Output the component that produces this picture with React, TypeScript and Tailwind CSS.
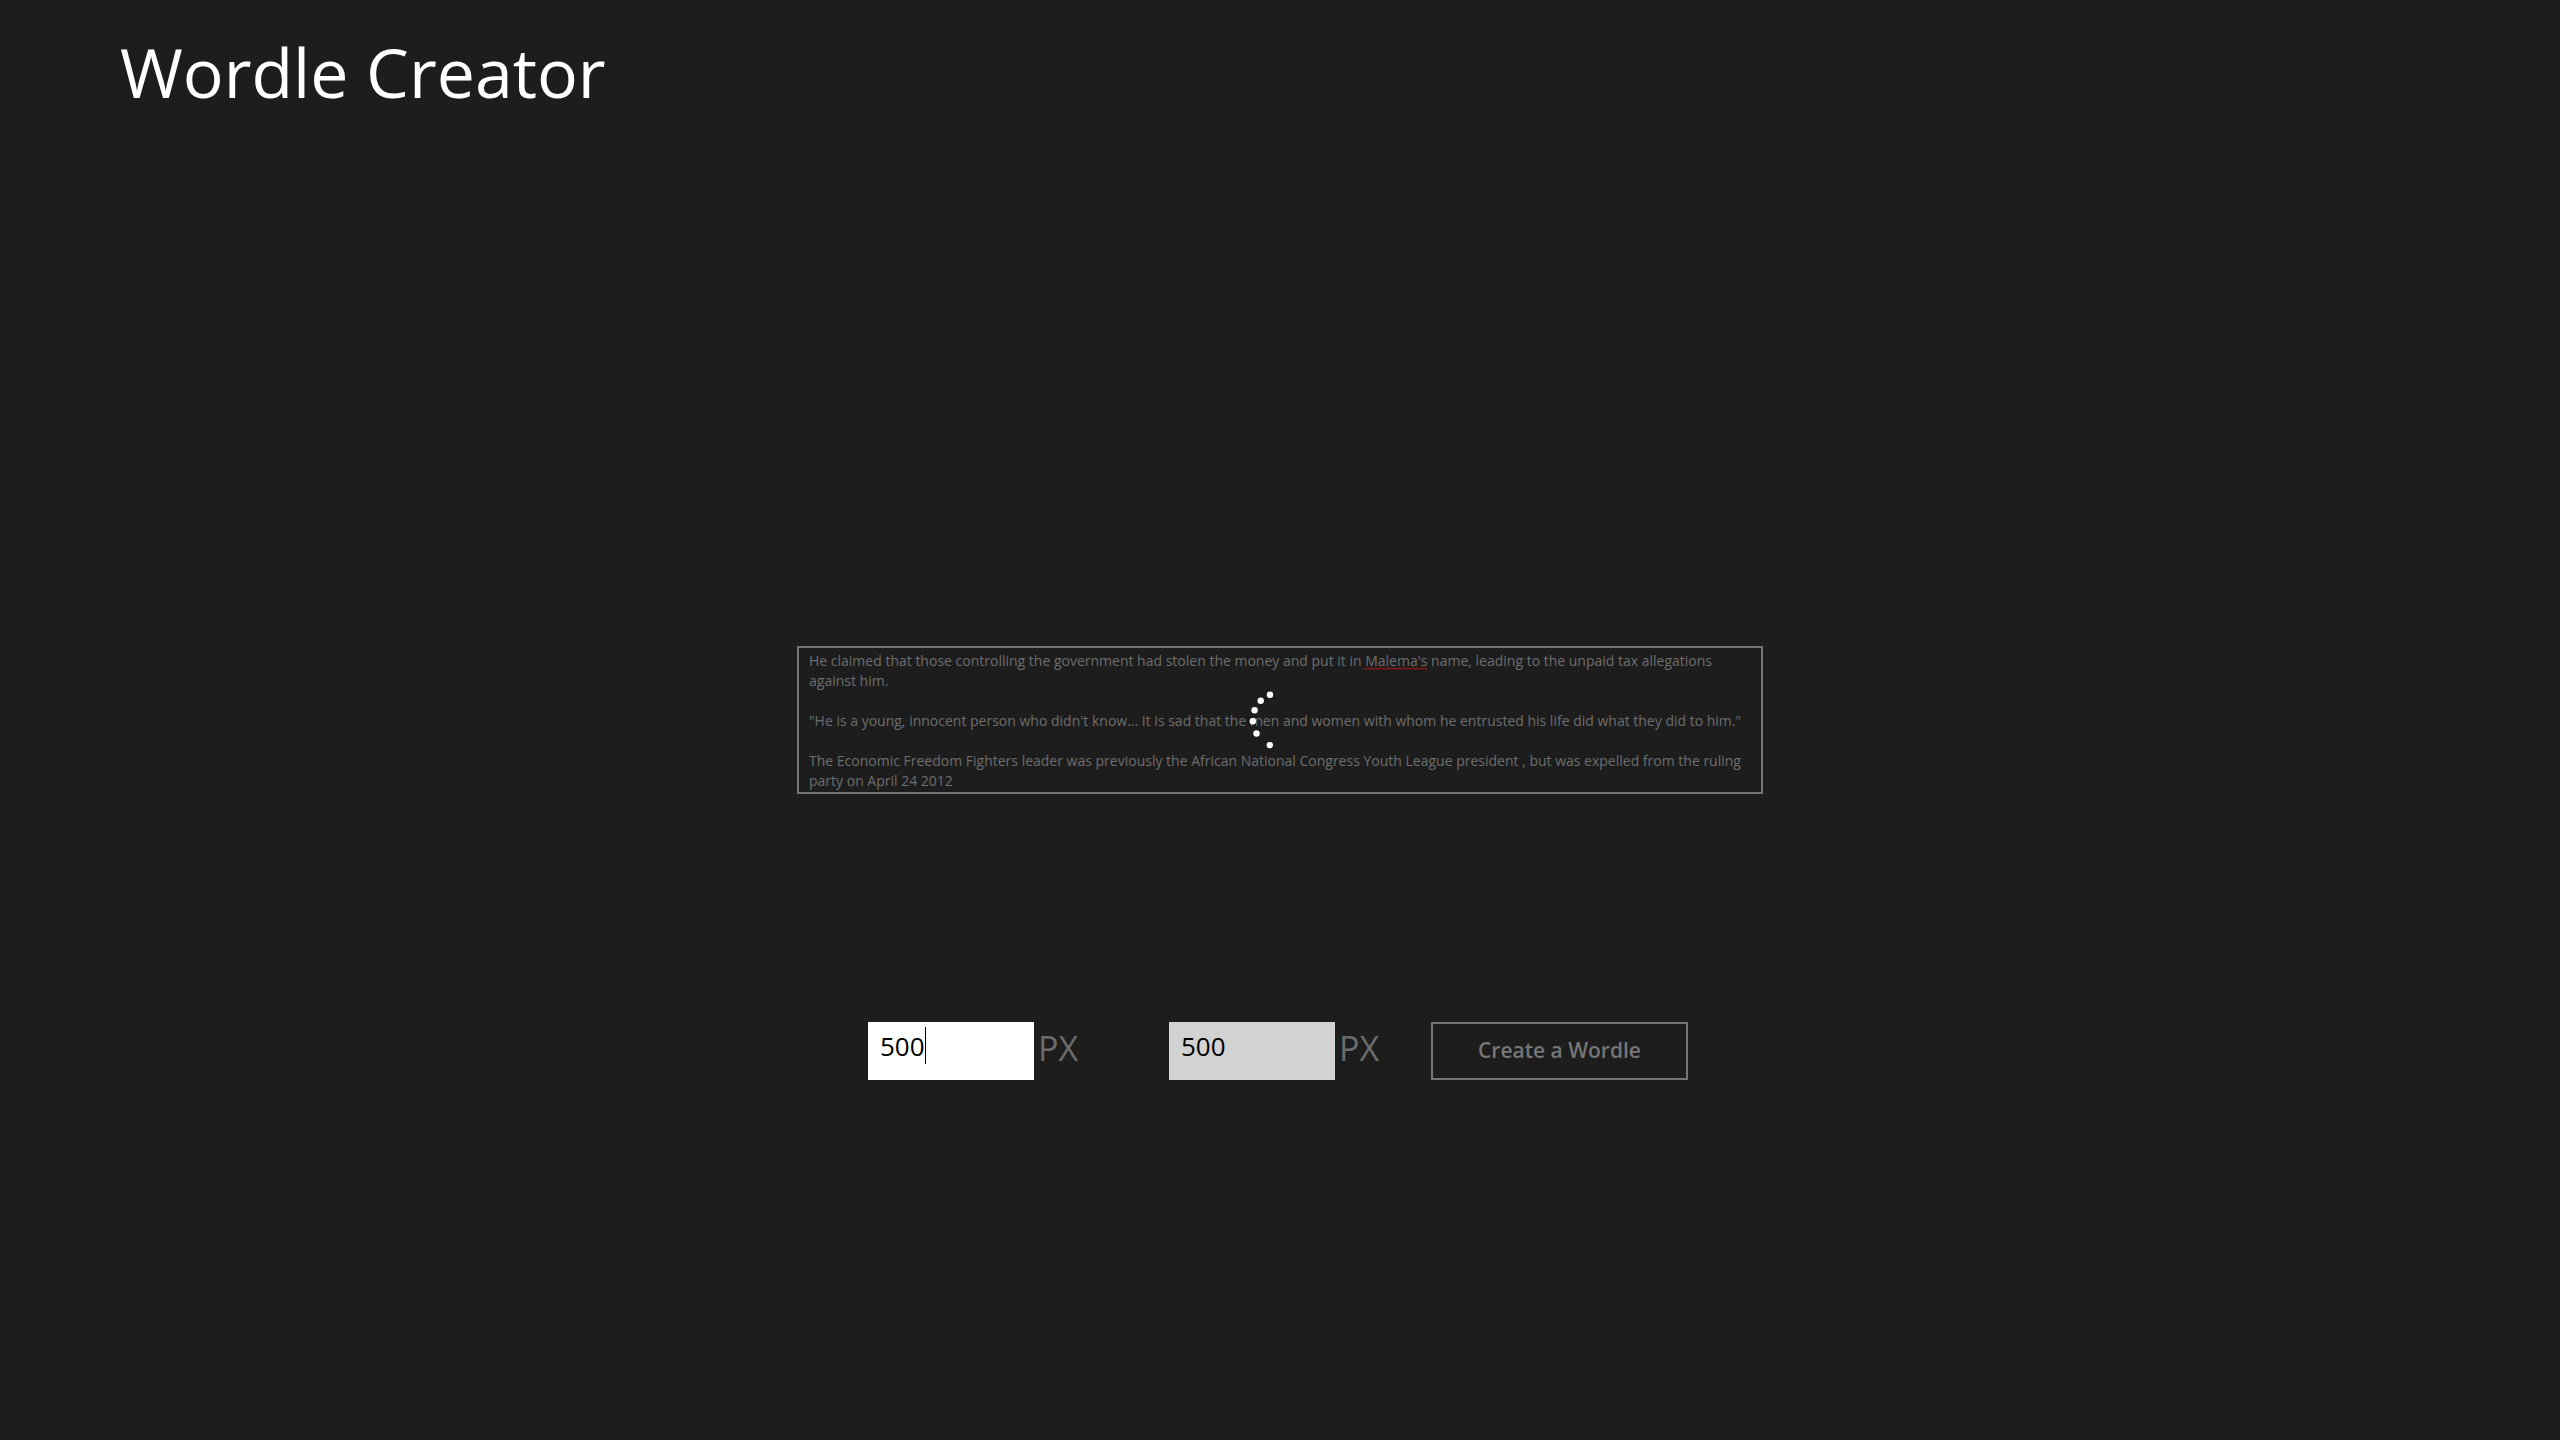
import { useState } from "react";

const article = `He claimed that those controlling the government had stolen the money and put it in Malema's name, leading to the unpaid tax allegations against him.

"He is a young, innocent person who didn't know... It is sad that the men and women with whom he entrusted his life did what they did to him."

The Economic Freedom Fighters leader was previously the African National Congress Youth League president , but was expelled from the ruling party on April 24 2012`;

const dots = [
  { x: 20, y: 4.7 },
  { x: 10.7, y: 10.8 },
  { x: 4.6, y: 20.2 },
  { x: 2.8, y: 31.2 },
  { x: 6.5, y: 43.5 },
  { x: 19.8, y: 55.1 },
];

function ProgressRing() {
  return (
    <svg
      className="pointer-events-none absolute inset-0 m-auto overflow-visible"
      width="60"
      height="60"
      viewBox="0 0 60 60"
      fill="white"
      role="progressbar"
      aria-label="Creating"
    >
      {dots.map((dot) => (
        <circle key={dot.y} cx={dot.x} cy={dot.y} r="3.2" />
      ))}
    </svg>
  );
}

// Red zigzag drawn under a misspelled word
function Squiggle() {
  return (
    <svg className="pointer-events-none absolute left-[567px] top-[21px]" width="63" height="4" aria-hidden="true">
      <defs>
        <pattern id="zigzag" width="4" height="4" patternUnits="userSpaceOnUse">
          <path d="M0 .5 2 2.5 4 .5" fill="none" stroke="#e01010" strokeWidth="1" />
        </pattern>
      </defs>
      <rect width="63" height="4" fill="url(#zigzag)" />
    </svg>
  );
}

interface SizeFieldProps {
  id: string;
  label: string;
  active?: boolean;
}

function SizeField({ id, label, active }: SizeFieldProps) {
  const [value, setValue] = useState("500");

  return (
    <div className="flex h-[58px] items-start gap-1">
      <div className="relative">
        <input
          id={id}
          type="text"
          aria-label={label}
          value={value}
          onChange={(e) => setValue(e.target.value)}
          className={`block h-[58px] w-[166px] px-3 pb-[10px] text-[26px] text-black outline-none ${
            active ? "bg-white" : "bg-[#d2d2d2]"
          }`}
        />
        {active && <span className="absolute left-[57px] top-[5px] h-[37px] w-px bg-black" />}
      </div>
      <label htmlFor={id} className="text-[34px] leading-[52px] text-[#6b6b6b]">
        PX
      </label>
    </div>
  );
}

export default function App() {
  const [text, setText] = useState(article);

  return (
    <div className="grid min-h-screen grid-rows-[1fr_auto_1fr] justify-items-center bg-[#1d1d1d] font-['Open_Sans',sans-serif]">
      <header className="w-full px-[120px] pt-[22px]">
        <h1 className="text-[68px] leading-[100px] text-white">Wordle Creator</h1>
      </header>

      <div className="relative h-[148px] w-[966px] max-w-full">
        <textarea
          aria-label="Wordle text"
          disabled
          spellCheck={false}
          value={text}
          onChange={(e) => setText(e.target.value)}
          className="block h-full w-full resize-none overflow-hidden border-2 border-[#767676] px-[10px] pt-[3px] text-[14px] leading-[20px] text-[#6e6e6e] outline-none"
        />
        <Squiggle />
        <ProgressRing />
      </div>

      <form className="flex items-start pr-1 pt-[228px]" onSubmit={(e) => e.preventDefault()}>
        <div className="w-[301px]">
          <SizeField id="width" label="Width" active />
        </div>
        <div className="w-[262px]">
          <SizeField id="height" label="Height" />
        </div>
        <button
          type="submit"
          disabled
          className="h-[58px] w-[257px] border-2 border-[#767676] text-[21px] font-semibold text-[#767676]"
        >
          Create a Wordle
        </button>
      </form>
    </div>
  );
}
